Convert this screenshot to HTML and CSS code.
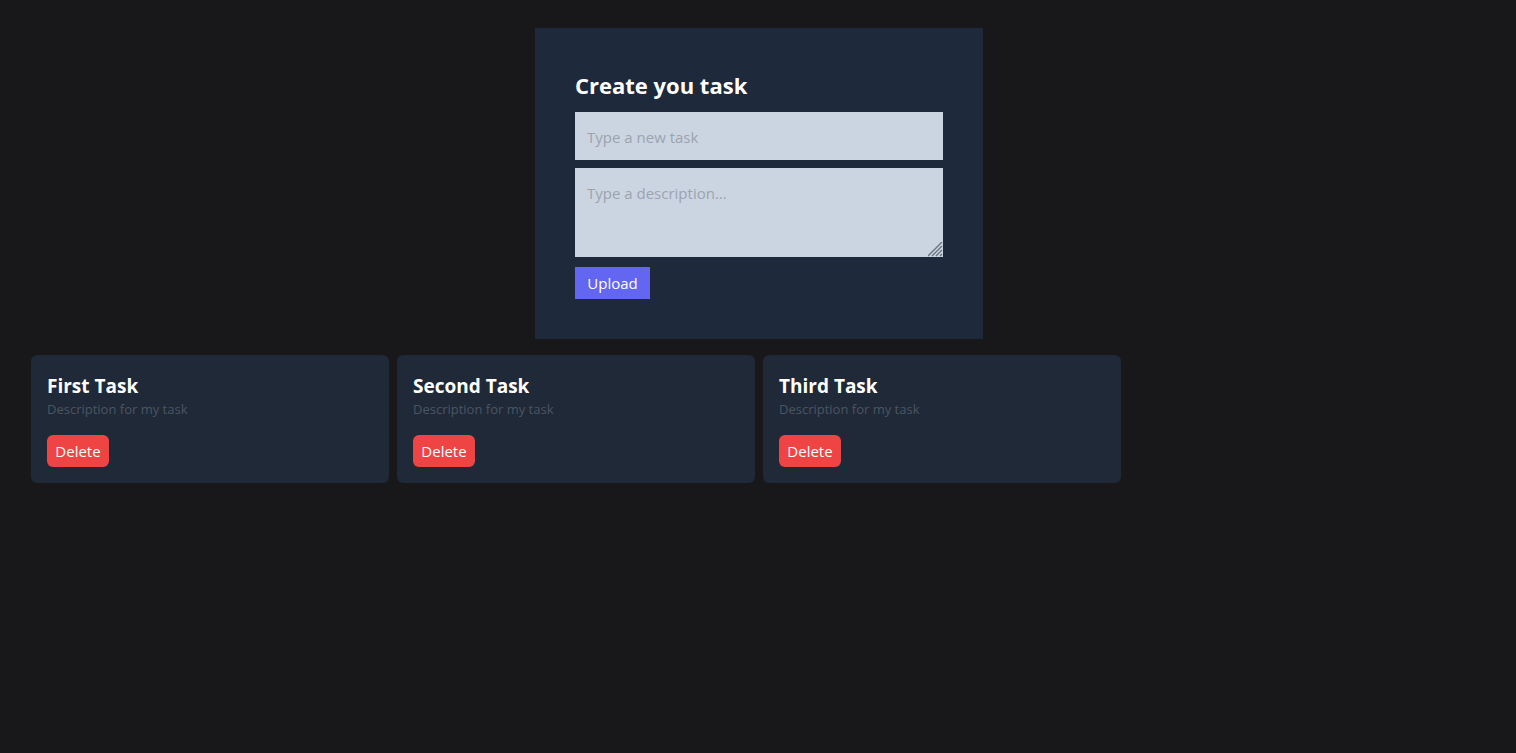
FILE: index.html
```html
<!DOCTYPE html>
<html lang="en">
<head>
<meta charset="utf-8">
<meta name="viewport" content="width=device-width, initial-scale=1">
<title>Tasks</title>
<link rel="stylesheet" href="styles.css">
</head>
<body>
<main class="page">
  <form class="task-form">
    <h1 class="form-title">Create you task</h1>
    <input class="field" type="text" placeholder="Type a new task" aria-label="Task title">
    <textarea class="field field-area" placeholder="Type a description..." aria-label="Task description"></textarea>
    <button class="upload" type="button">Upload</button>
  </form>
  <section class="task-grid">
    <article class="card">
      <h2 class="card-title">First Task</h2>
      <p class="card-text">Description for my task</p>
      <button class="delete" type="button">Delete</button>
    </article>
    <article class="card">
      <h2 class="card-title">Second Task</h2>
      <p class="card-text">Description for my task</p>
      <button class="delete" type="button">Delete</button>
    </article>
    <article class="card">
      <h2 class="card-title">Third Task</h2>
      <p class="card-text">Description for my task</p>
      <button class="delete" type="button">Delete</button>
    </article>
  </section>
</main>
</body>
</html>
```
FILE: styles.css
```css
*, *::before, *::after { box-sizing: border-box; }

body {
  margin: 0;
  background: #18181b;
  color: #fff;
  font: 15px/24px "Segoe UI", "Open Sans", "Noto Sans", sans-serif;
}

h1, h2, p { margin: 0; }

button, input, textarea { font: inherit; border: 0; }

.page { padding: 28px 29px 28px 31px; }

.task-form {
  max-width: 448px;
  margin: 0 auto 16px;
  padding: 40px;
  background: #1e293b;
}

.form-title {
  padding-top: 1px;
  margin-bottom: 11px;
  font-size: 22px;
  line-height: 32px;
  font-weight: 700;
}

.field {
  display: block;
  width: 100%;
  height: 48px;
  margin-bottom: 8px;
  padding: 13px 12px 11px;
  border-radius: 0;
  background: #cbd5e1;
  color: #000;
}

.field::placeholder { color: #9ca3af; opacity: 1; }

.field-area { height: 89px; margin-bottom: 10px; resize: both; }

.field-area::-webkit-scrollbar { width: 16px; height: 16px; }

.field-area::-webkit-resizer {
  background: url("data:image/svg+xml,%3Csvg xmlns='http://www.w3.org/2000/svg' width='16' height='16'%3E%3Cpath d='M1 15 15 1M5 15 15 5M9 15 15 9M13 15 15 13' stroke='%236b7280' stroke-width='1.4'/%3E%3C/svg%3E") -1px -1px no-repeat;
}

.upload {
  display: block;
  min-width: 75px;
  padding: 4px 12px;
  background: #6366f1;
  color: #fff;
}

.task-grid {
  display: grid;
  grid-template-columns: repeat(4, 1fr);
  gap: 8px;
}

.card {
  padding: 16px;
  border-radius: 6px;
  background: #1f2937;
}

.card-title {
  padding-top: 2px;
  font-size: 19px;
  line-height: 26px;
  font-weight: 700;
}

.card-text {
  margin-bottom: 16px;
  color: #4b5563;
  font-size: 13px;
  line-height: 20px;
}

.delete {
  display: block;
  min-width: 62px;
  padding: 4px 8px;
  border-radius: 6px;
  background: #ef4444;
  color: #fff;
}
```
